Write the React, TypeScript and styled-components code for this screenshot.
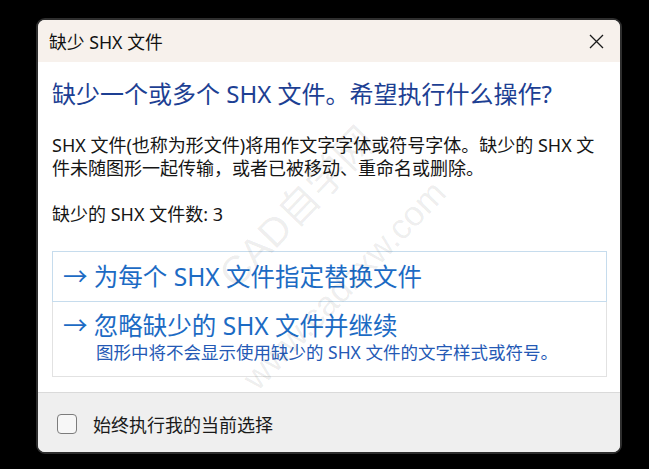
import React from 'react';
import styled, { createGlobalStyle } from 'styled-components';

const GlobalStyle = createGlobalStyle`
  html, body {
    margin: 0;
    padding: 0;
    background: #000;
  }
  body {
    width: 649px;
    height: 469px;
    overflow: hidden;
    font-family: "Noto Sans", "Noto Sans CJK SC", sans-serif;
  }
`;

const Stage = styled.div`
  padding: 18px 0 0 36px;
`;

const Window = styled.div`
  position: relative;
  width: 586px;
  height: 436px;
  box-sizing: border-box;
  border: 2px solid #2e2e2e;
  border-radius: 9px;
  overflow: hidden;
  display: flex;
  flex-direction: column;
  background: #fff;
`;

const TitleBar = styled.div`
  height: 42px;
  flex: none;
  display: flex;
  align-items: center;
  justify-content: space-between;
  padding: 0 16px 0 11px;
  background: #f7f1ec;
  color: #111;
  font-size: 17.8px;
`;

const CloseButton = styled.button`
  border: none;
  background: transparent;
  padding: 0;
  width: 16px;
  height: 16px;
  display: flex;
  align-items: center;
  justify-content: center;
  cursor: pointer;
`;

const Content = styled.div`
  flex: 1;
  padding: 0 13px 0 14px;
  display: flex;
  flex-direction: column;
`;

const Heading = styled.h1`
  margin: 18px 0 0;
  font-size: 24px;
  font-weight: 400;
  line-height: 28px;
  color: #1d3f93;
`;

const Paragraph = styled.p<{ $gap: number }>`
  margin: ${(p) => p.$gap}px 0 0;
  font-size: 18px;
  line-height: 23px;
  color: #151515;
`;

const Options = styled.div`
  margin-top: 25px;
  display: flex;
  flex-direction: column;
`;

const Option = styled.div<{ $accent?: boolean }>`
  box-sizing: border-box;
  height: ${(p) => (p.$accent ? 51 : 75)}px;
  border: 1px solid ${(p) => (p.$accent ? '#c6dced' : '#e2e2e2')};
  ${(p) => (p.$accent ? '' : 'border-top: none;')}
  padding: ${(p) => (p.$accent ? '0 10px' : '10px 10px 0')};
  display: flex;
  flex-direction: column;
  justify-content: ${(p) => (p.$accent ? 'center' : 'flex-start')};
`;

const OptionTitle = styled.div`
  font-size: 24.5px;
  line-height: 28px;
  color: #1c6bc4;
`;

const OptionNote = styled.div`
  padding-left: 33px;
  font-size: 17.5px;
  line-height: 24px;
  color: #2459b5;
`;

const Footer = styled.div`
  height: 60px;
  flex: none;
  box-sizing: border-box;
  border-top: 1px solid #dadada;
  background: #efefef;
  display: flex;
  align-items: center;
  gap: 16px;
  padding: 3px 0 0 19px;
`;

const Check = styled.span`
  width: 18px;
  height: 18px;
  border: 1px solid #7c7c7c;
  border-radius: 4px;
  background: #f7f7f7;
`;

const CheckLabel = styled.span`
  font-size: 18px;
  color: #1a1a1a;
`;

// faint diagonal site watermark lying over the dialog
const Watermark = styled.span<{ $size: number }>`
  position: absolute;
  transform: translate(-50%, -50%) rotate(-46deg);
  white-space: nowrap;
  font-size: ${(p) => p.$size}px;
  font-family: "Liberation Sans", "Noto Sans CJK SC", sans-serif;
  color: rgba(0, 0, 0, 0.08);
  pointer-events: none;
`;

const App: React.FC = () => {
  return (
    <Stage>
      <GlobalStyle />
      <Window>
        <TitleBar>
          <span>缺少 SHX 文件</span>
          <CloseButton aria-label="关闭">
            <svg width="15" height="15" viewBox="0 0 15 15">
              <path d="M1 1 L14 14 M14 1 L1 14" stroke="#1a1a1a" strokeWidth="1.3" />
            </svg>
          </CloseButton>
        </TitleBar>

        <Content>
          <Heading>缺少一个或多个 SHX 文件。希望执行什么操作?</Heading>
          <Paragraph $gap={26}>
            SHX 文件(也称为形文件)将用作文字字体或符号字体。缺少的 SHX 文件未随图形一起传输，或者已被移动、重命名或删除。
          </Paragraph>
          <Paragraph $gap={23}>缺少的 SHX 文件数: 3</Paragraph>

          <Options>
            <Option $accent>
              <OptionTitle>→ 为每个 SHX 文件指定替换文件</OptionTitle>
            </Option>
            <Option>
              <OptionTitle>→ 忽略缺少的 SHX 文件并继续</OptionTitle>
              <OptionNote>图形中将不会显示使用缺少的 SHX 文件的文字样式或符号。</OptionNote>
            </Option>
          </Options>
        </Content>

        <Footer>
          <Check />
          <CheckLabel>始终执行我的当前选择</CheckLabel>
        </Footer>

        <Watermark $size={40} style={{ left: 257, top: 185 }}>CAD自学网</Watermark>
        <Watermark $size={35} style={{ left: 306, top: 265 }}>www.cadzxw.com</Watermark>
      </Window>
    </Stage>
  );
};

export default App;
